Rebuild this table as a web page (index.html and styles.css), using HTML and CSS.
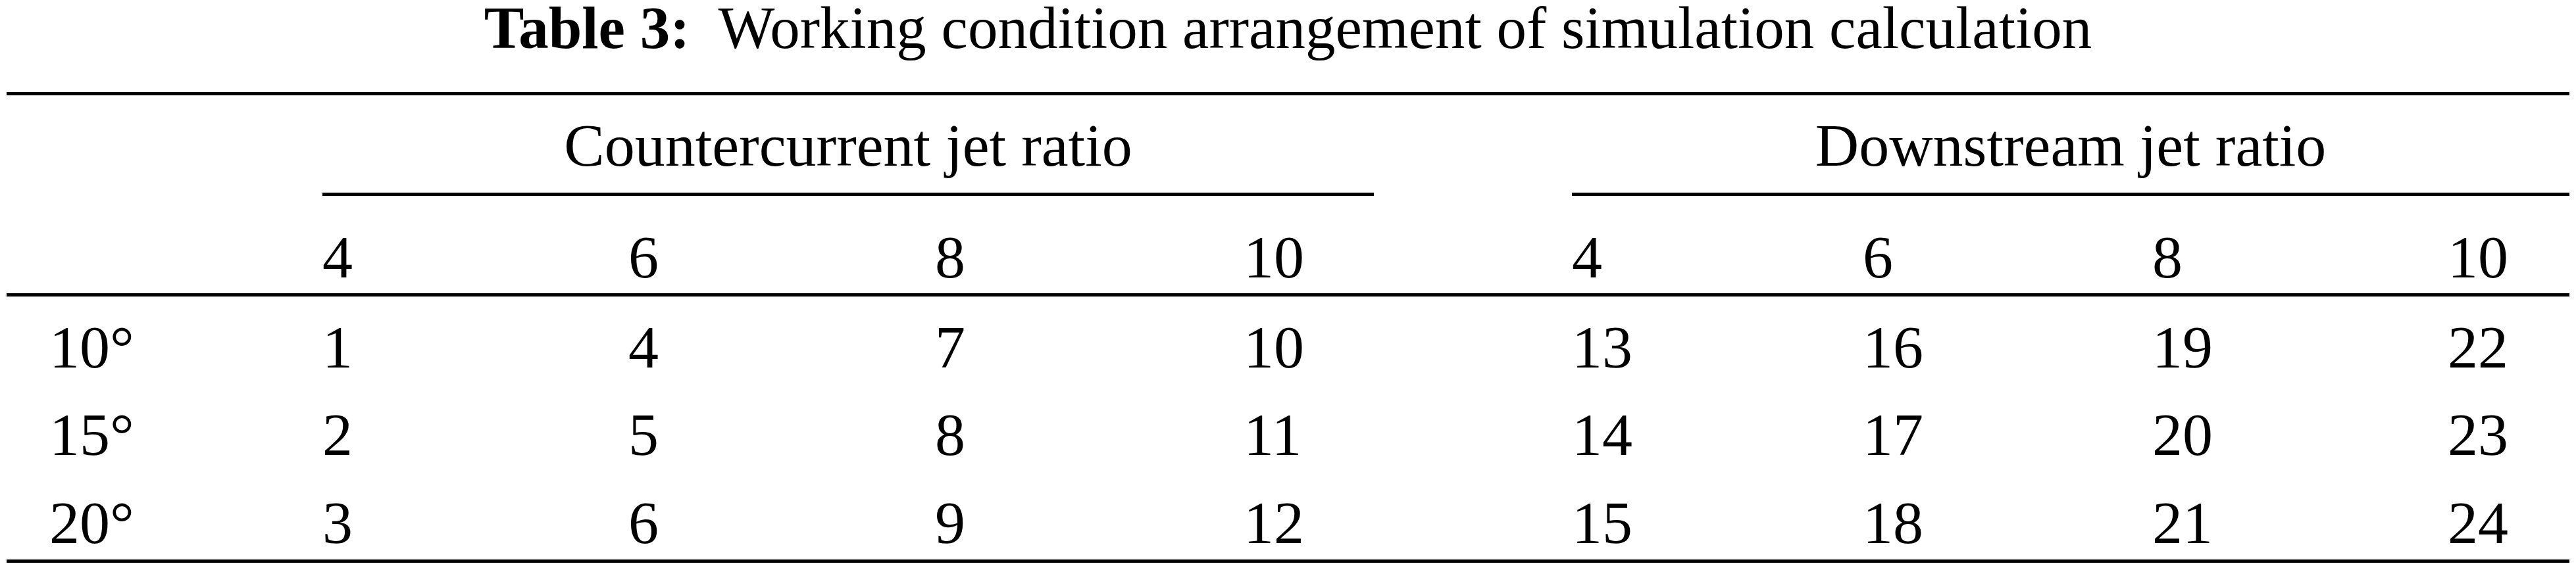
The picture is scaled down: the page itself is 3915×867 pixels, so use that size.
FILE: index.html
```html
<!DOCTYPE html>
<html lang="en">
    <head>
        <meta charset="utf-8" />
        <title>Table 3</title>
        <link rel="stylesheet" href="styles.css">
    </head>

    <body>
        <table class="conditions">
            <caption><span class="label">Table 3:</span> Working condition arrangement of simulation calculation</caption>
            <colgroup>
                <col class="col-angle">
                <col class="col-c1"><col class="col-c2"><col class="col-c3"><col class="col-c4">
                <col class="col-gap">
                <col class="col-d1"><col class="col-d2"><col class="col-d3"><col class="col-d4">
            </colgroup>
            <thead>
                <tr class="groups">
                    <th class="first"></th>
                    <th colspan="4" class="group">Countercurrent jet ratio</th>
                    <th></th>
                    <th colspan="4" class="group">Downstream jet ratio</th>
                </tr>
                <tr class="ratios">
                    <th class="first"></th>
                    <th>4</th><th>6</th><th>8</th><th>10</th>
                    <th></th>
                    <th>4</th><th>6</th><th>8</th><th>10</th>
                </tr>
            </thead>
            <tbody>
                <tr>
                    <td class="first">10°</td>
                    <td>1</td><td>4</td><td>7</td><td>10</td>
                    <td></td>
                    <td>13</td><td>16</td><td>19</td><td>22</td>
                </tr>
                <tr>
                    <td class="first">15°</td>
                    <td>2</td><td>5</td><td>8</td><td>11</td>
                    <td></td>
                    <td>14</td><td>17</td><td>20</td><td>23</td>
                </tr>
                <tr>
                    <td class="first">20°</td>
                    <td>3</td><td>6</td><td>9</td><td>12</td>
                    <td></td>
                    <td>15</td><td>18</td><td>21</td><td>24</td>
                </tr>
            </tbody>
        </table>
    </body>
</html>
```

FILE: styles.css
```css
html, body {
    margin: 0;
    padding: 0;
    background: #fff;
}
body {
    font-family: "Liberation Serif", "Times New Roman", Times, serif;
    color: #000;
    padding-top: 3px;
}
.conditions {
    margin-left: 10px;
    width: 3895px;
    table-layout: fixed;
    border-collapse: separate;
    border-spacing: 0;
    border-top: 5px solid #000;
    border-bottom: 5px solid #000;
    font-size: 92px;
}
caption {
    font-size: 91px;
    line-height: 80px;
    padding-bottom: 57px;
    text-align: center;
    white-space: nowrap;
}
caption .label {
    font-weight: bold;
    margin-right: 22px;
}
.col-angle { width: 480px; }
.col-c1 { width: 465px; }
.col-c2 { width: 466px; }
.col-c3 { width: 469px; }
.col-c4 { width: 198px; }
.col-gap { width: 301px; }
.col-d1 { width: 442px; }
.col-d2 { width: 440px; }
.col-d3 { width: 449px; }
.col-d4 { width: 185px; }
th, td {
    padding: 0;
    font-weight: normal;
    text-align: left;
    line-height: 110px;
    white-space: nowrap;
}
.first {
    padding-left: 65px;
}
.groups th {
    padding-top: 21px;
    padding-bottom: 17px;
}
.groups .first {
    padding-left: 0;
}
.groups .group {
    text-align: center;
    border-bottom: 5px solid #000;
}
.ratios th {
    padding-top: 38px;
    border-bottom: 5px solid #000;
}
tbody td {
    padding-top: 23px;
}
tbody tr:first-child td {
    padding-top: 22px;
}
tbody tr:last-child td {
    padding-top: 24px;
    padding-bottom: 1px;
}
```
